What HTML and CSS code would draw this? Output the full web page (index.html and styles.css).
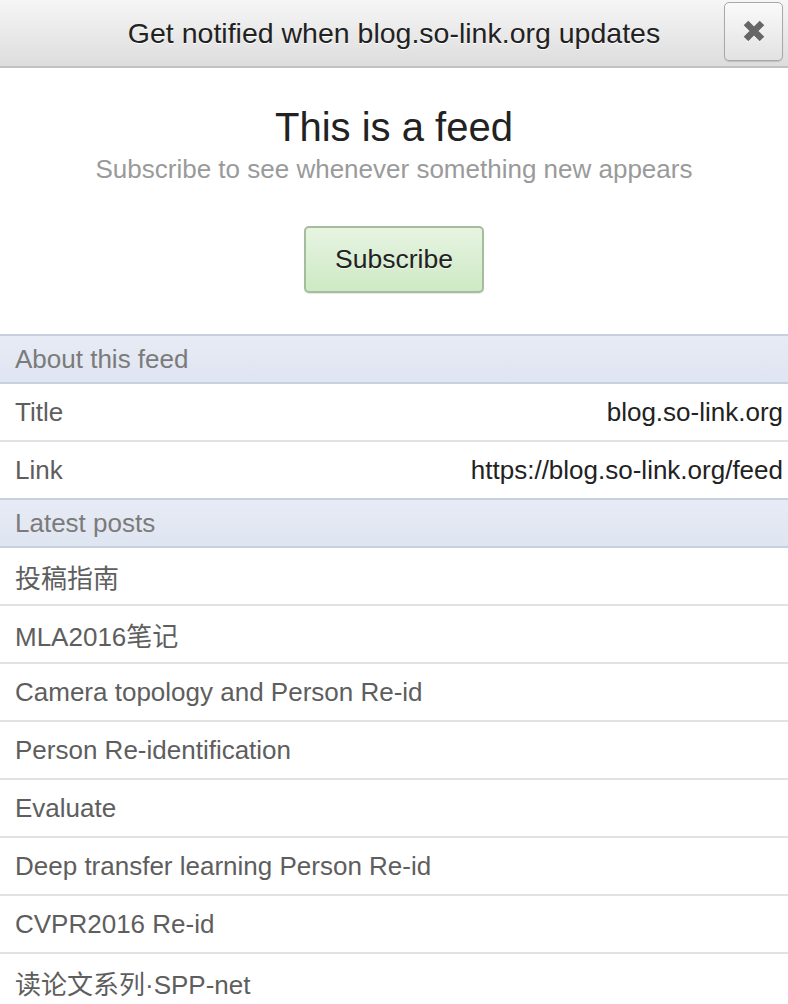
FILE: index.html
```html
<!DOCTYPE html>
<html>
<head>
<meta charset="utf-8">
<link rel="stylesheet" href="styles.css">
</head>
<body>
<header class="topbar">
  <div class="topbar-title">Get notified when blog.so-link.org updates</div>
  <button class="close-btn" aria-label="Close">
    <svg width="24" height="24" viewBox="0 0 24 24"><path d="M4 4 L20 20 M20 4 L4 20" stroke="#fff" stroke-width="6.5" transform="translate(0,1)" opacity="0.8"/><path d="M4 4 L20 20 M20 4 L4 20" stroke="#666" stroke-width="6.5"/></svg>
  </button>
</header>
<section class="hero">
  <h1 class="hero-title">This is a feed</h1>
  <p class="hero-sub">Subscribe to see whenever something new appears</p>
  <button class="subscribe-btn">Subscribe</button>
</section>
<div class="section-head">About this feed</div>
<div class="row kv"><span class="label">Title</span><span class="value">blog.so-link.org</span></div>
<div class="row kv last"><span class="label">Link</span><span class="value">https://blog.so-link.org/feed</span></div>
<div class="section-head">Latest posts</div>
<div class="row">投稿指南</div>
<div class="row">MLA2016笔记</div>
<div class="row">Camera topology and Person Re-id</div>
<div class="row">Person Re-identification</div>
<div class="row">Evaluate</div>
<div class="row">Deep transfer learning Person Re-id</div>
<div class="row">CVPR2016 Re-id</div>
<div class="row">读论文系列·SPP-net</div>
</body>
</html>
```
FILE: styles.css
```css
* { box-sizing: border-box; }
html, body { margin: 0; padding: 0; background: #fff; }
body {
  font-family: "Liberation Sans", Arial, "Noto Sans CJK SC", sans-serif;
  font-size: 26px;
  color: #222;
  overflow: hidden;
}
.topbar {
  display: grid;
  grid-template-columns: 1fr auto;
  align-items: center;
  height: 68px;
  background: linear-gradient(#f6f6f6, #dddddd);
  border-bottom: 2px solid #c2c2c2;
  padding: 0 5px 0 0;
  position: relative;
}
.topbar-title {
  position: absolute;
  left: 0; right: 0; top: 0; bottom: 0;
  display: flex;
  align-items: center;
  justify-content: center;
  font-size: 28.5px;
  color: #222;
  text-shadow: 0 1px 0 #fff;
}
.close-btn {
  grid-column: 2;
  width: 59px;
  height: 59px;
  margin-top: -4px;
  border: 1px solid #a9a9a9;
  border-radius: 5px;
  background: linear-gradient(#fafafa, #e2e2e2);
  box-shadow: 0 1px 1px rgba(0,0,0,0.15);
  display: flex;
  align-items: center;
  justify-content: center;
  padding: 0;
  position: relative;
  z-index: 1;
}
.hero {
  display: flex;
  flex-direction: column;
  align-items: center;
  padding: 36px 0 41px;
}
.hero-title {
  margin: 0;
  font-weight: normal;
  font-size: 40px;
  line-height: 46px;
  color: #222;
}
.hero-sub {
  margin: 3px 0 0;
  font-size: 26px;
  line-height: 32px;
  color: #9a9a9a;
}
.subscribe-btn {
  margin-top: 41px;
  width: 180px;
  height: 67px;
  border: 2px solid #a3bd9d;
  border-radius: 5px;
  background: linear-gradient(#e7f4e2, #cde9c4);
  font-family: inherit;
  font-size: 26.5px;
  color: #222;
  text-shadow: 0 1px 0 rgba(255,255,255,0.6);
  box-shadow: 0 1px 1px rgba(0,0,0,0.1);
}
.section-head {
  height: 50px;
  display: flex;
  align-items: center;
  padding-left: 15px;
  background: linear-gradient(#e7ebf5, #dfe5f1);
  border-top: 2px solid #c7d0df;
  border-bottom: 2px solid #c7d0df;
  color: #7b7b7b;
}
.row {
  height: 58px;
  display: flex;
  align-items: center;
  padding: 0 5px 0 15px;
  border-bottom: 2px solid #e2e2e2;
  color: #5e5e5e;
}
.row.last { border-bottom: 0; height: 56px; }
.kv { justify-content: space-between; }
.kv .value { color: #222; }
```
